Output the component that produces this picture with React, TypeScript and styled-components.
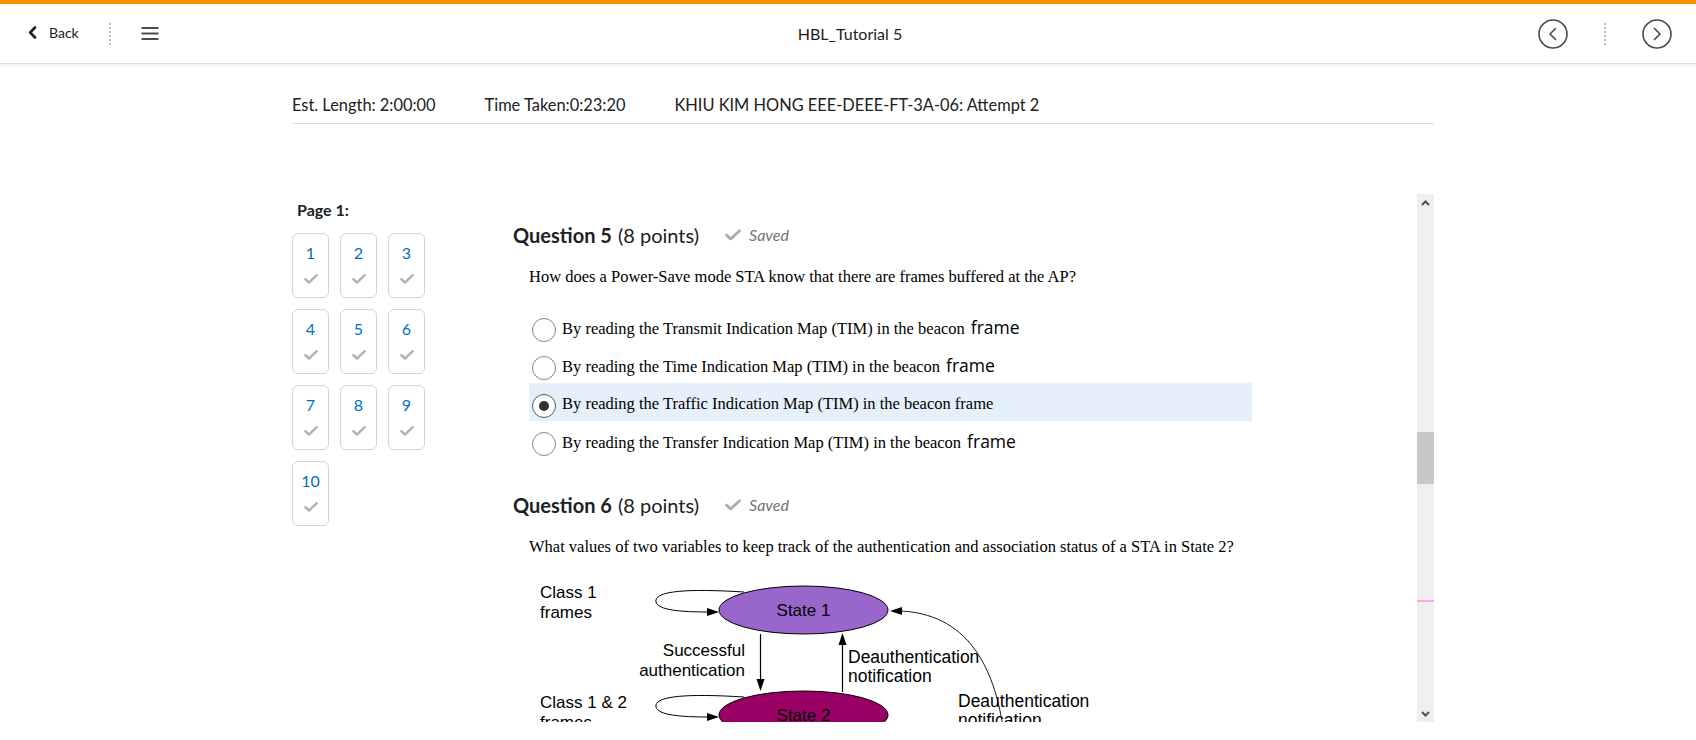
import React from 'react';
import styled, { createGlobalStyle } from 'styled-components';

const GlobalStyle = createGlobalStyle`
  html, body { margin: 0; padding: 0; background: #ffffff; }
  body { font-family: Lato, "Noto Sans", sans-serif; color: #202122; overflow: hidden; }
  * { box-sizing: border-box; }
`;

const Page = styled.div`
  width: 1696px;
  height: 740px;
  overflow: hidden;
  background: #fff;
`;

const TopBar = styled.header`
  height: 64px;
  border-top: 4px solid #f49200;
  border-bottom: 1px solid #dcdcdc;
  box-shadow: 0 2px 4px rgba(0, 0, 0, 0.07);
  display: grid;
  grid-template-columns: 1fr auto 1fr;
  align-items: center;
  padding: 0 24px 0 28px;
  position: relative;
  z-index: 2;
  background: #fff;
`;

const Group = styled.div<{ $end?: boolean }>`
  display: flex;
  align-items: center;
  justify-content: ${(p) => (p.$end ? 'flex-end' : 'flex-start')};
  gap: ${(p) => (p.$end ? '36px' : '30px')};
`;

const BackButton = styled.div`
  display: flex;
  align-items: center;
  gap: 12px;
  font-size: 14px;
  color: #202122;
  margin-bottom: 2px;
`;

const Title = styled.div`
  font-size: 16px;
  color: #202122;
  margin-bottom: 1px;
`;

const DotSep = styled.span`
  display: block;
  width: 2px;
  height: 22px;
  background: repeating-linear-gradient(to bottom, #b8bcc0 0 2px, transparent 2px 4px);
`;

const IconBox = styled.span`
  display: flex;
  align-items: center;
  justify-content: center;
`;

const InfoBar = styled.div`
  margin: 29px 0 0 292px;
  width: 1142px;
  display: flex;
  gap: 49px;
  font-size: 16.4px;
  line-height: 24px;
  padding-bottom: 6px;
  border-bottom: 1px solid #d9dcde;
  color: #202122;
`;

const Body = styled.div`
  margin: 70px 0 0 292px;
  display: flex;
  height: 528px;
  width: 1142px;
`;

const Nav = styled.nav`
  width: 208px;
  padding-top: 6px;
`;

const NavLabel = styled.div`
  font-size: 16px;
  font-weight: 700;
  line-height: 20px;
  padding-left: 5px;
`;

const NavGrid = styled.div`
  margin-top: 13px;
  display: grid;
  grid-template-columns: repeat(3, 37px);
  gap: 11px;
`;

const NavBox = styled.div`
  height: 65px;
  border: 1px solid #cfd5db;
  border-radius: 6px;
  display: flex;
  flex-direction: column;
  align-items: center;
  padding-top: 9px;
`;

const NavNum = styled.span`
  font-size: 16px;
  line-height: 20px;
  color: #006fbf;
`;

const NavCheck = styled.span`
  margin-top: 11px;
  display: flex;
`;

const Pane = styled.div`
  flex: 1;
  display: flex;
  height: 528px;
`;

const PaneContent = styled.div`
  flex: 1;
  overflow: hidden;
  padding: 26px 0 0 13px;
`;

const Heading = styled.div<{ $gap?: number }>`
  display: flex;
  align-items: center;
  font-size: 20px;
  line-height: 30px;
  margin-top: ${(p) => p.$gap ?? 0}px;
  color: #202122;
`;

const Strong = styled.strong`
  font-weight: 700;
  margin-right: 6px;
`;

const Saved = styled.span`
  display: flex;
  align-items: center;
  gap: 8px;
  margin-left: 26px;
  font-size: 16px;
  font-style: italic;
  color: #6e7477;
`;

const QText = styled.p`
  margin: 17px 0 0 16px;
  font-family: "Liberation Serif", "Times New Roman", serif;
  font-size: 16.5px;
  line-height: 20px;
  color: #000;
`;

const Options = styled.div`
  margin: 20px 0 0 16px;
  width: 723px;
  display: flex;
  flex-direction: column;
`;

const OptionRow = styled.label<{ $selected?: boolean }>`
  height: 38px;
  display: flex;
  align-items: center;
  padding: 4px 0 0 3px;
  gap: 6px;
  background: ${(p) => (p.$selected ? '#e6f0fb' : 'transparent')};
  font-family: "Liberation Serif", "Times New Roman", serif;
  font-size: 16.5px;
  line-height: 20px;
  color: #000;
`;

const Radio = styled.input`
  appearance: none;
  margin: 4px 0 0 0;
  width: 24px;
  height: 24px;
  border-radius: 50%;
  border: 1px solid #858585;
  background: #fff;
  display: grid;
  place-items: center;
  flex: none;
  &:checked {
    border-color: #5a5a5a;
  }
  &:checked::after {
    content: '';
    width: 10px;
    height: 10px;
    border-radius: 50%;
    background: #333;
  }
`;

const SansWord = styled.span`
  font-family: "Open Sans", "Noto Sans", sans-serif;
  font-size: 17.5px;
  margin-left: 6px;
`;

const Diagram = styled.svg`
  display: block;
  margin: 19px 0 0 17px;
  font-family: "Liberation Sans", Arial, sans-serif;
  font-size: 17px;
`;

const Scrollbar = styled.div`
  width: 17px;
  display: flex;
  flex-direction: column;
  background: #efefef;
`;

const ScrollButton = styled.div`
  height: 17px;
  display: flex;
  align-items: center;
  justify-content: center;
`;

const Track = styled.div`
  flex: 1;
  position: relative;
`;

const Thumb = styled.div`
  margin-top: 221px;
  height: 52px;
  background: #c8c8c8;
`;

const Marker = styled.div`
  position: absolute;
  left: 0;
  right: 0;
  top: 389px;
  height: 2px;
  background: #f2a8ee;
`;

const CheckIcon = ({ w = 14, color = '#afb4b8' }: { w?: number; color?: string }) => (
  <svg width={w} height={Math.round(w * 0.72)} viewBox="0 0 13 9.4">
    <polyline points="1.2,4.8 4.6,8 11.8,1.2" fill="none" stroke={color} strokeWidth="2.3" strokeLinecap="round" strokeLinejoin="round" />
  </svg>
);

const CircleChevron = ({ dir }: { dir: 'left' | 'right' }) => (
  <svg width="30" height="30" viewBox="0 0 30 30">
    <circle cx="15" cy="15" r="14" fill="none" stroke="#494c4e" strokeWidth="1.6" />
    <polyline
      points={dir === 'left' ? '17.5,9.5 12,15 17.5,20.5' : '12.5,9.5 18,15 12.5,20.5'}
      fill="none"
      stroke="#494c4e"
      strokeWidth="1.7"
      strokeLinecap="round"
      strokeLinejoin="round"
    />
  </svg>
);

const navItems = ['1', '2', '3', '4', '5', '6', '7', '8', '9', '10'];

const q5Options: { text: string; sans: boolean; selected?: boolean }[] = [
  { text: 'By reading the Transmit Indication Map (TIM) in the beacon', sans: true },
  { text: 'By reading the Time Indication Map (TIM) in the beacon', sans: true },
  { text: 'By reading the Traffic Indication Map (TIM) in the beacon frame', sans: false, selected: true },
  { text: 'By reading the Transfer Indication Map (TIM) in the beacon', sans: true },
];

const Arrow = ({ x, y, dir }: { x: number; y: number; dir: 'right' | 'down' | 'up' | 'left' }) => {
  let pts = '';
  if (dir === 'right') pts = `${x},${y} ${x - 12},${y - 4} ${x - 12},${y + 4}`;
  if (dir === 'left') pts = `${x},${y} ${x + 12},${y - 4} ${x + 12},${y + 4}`;
  if (dir === 'down') pts = `${x},${y} ${x - 4},${y - 12} ${x + 4},${y - 12}`;
  if (dir === 'up') pts = `${x},${y} ${x - 4},${y + 12} ${x + 4},${y + 12}`;
  return <polygon points={pts} fill="#000" />;
};

const StateDiagram = () => (
  <Diagram width="620" height="200" viewBox="0 0 620 200">
    <text x="10" y="22">Class 1</text>
    <text x="10" y="42">frames</text>
    <path d="M214 16 C150 12, 124 16, 126 26 C128 34, 150 36, 178 36" fill="none" stroke="#000" strokeWidth="1" />
    <Arrow x={189} y={36} dir="right" />
    <ellipse cx="273.5" cy="34" rx="84.5" ry="24" fill="#9966cc" stroke="#000" strokeWidth="1" />
    <text x="273.5" y="40" textAnchor="middle">State 1</text>

    <line x1="230.5" y1="58" x2="230.5" y2="104" stroke="#000" strokeWidth="1.2" />
    <Arrow x={230.5} y={115} dir="down" />
    <line x1="312.5" y1="68" x2="312.5" y2="116" stroke="#000" strokeWidth="1.2" />
    <Arrow x={312.5} y={57} dir="up" />

    <text x="215" y="80" textAnchor="end">Successful</text>
    <text x="215" y="100" textAnchor="end">authentication</text>
    <text x="318" y="87" fontSize="17.5">Deauthentication</text>
    <text x="318" y="106" fontSize="17.5">notification</text>

    <text x="10" y="132">Class 1 &amp; 2</text>
    <text x="10" y="152">frames</text>
    <path d="M214 121 C150 117, 124 121, 126 131 C128 139, 150 141, 178 141" fill="none" stroke="#000" strokeWidth="1" />
    <Arrow x={189} y={141} dir="right" />
    <ellipse cx="273.5" cy="139" rx="84.5" ry="24" fill="#990066" stroke="#000" strokeWidth="1" />
    <text x="273.5" y="145" textAnchor="middle">State 2</text>

    <text x="428" y="131" fontSize="17.5">Deauthentication</text>
    <text x="428" y="150" fontSize="17.5">notification</text>
    <path d="M371 35 C430 38, 474 80, 477 200" fill="none" stroke="#000" strokeWidth="0.9" />
    <Arrow x={360} y={35} dir="left" />
  </Diagram>
);

export default function App() {
  return (
    <Page>
      <GlobalStyle />
      <TopBar>
        <Group>
          <BackButton>
            <svg width="9" height="13" viewBox="0 0 9 13">
              <polyline points="7,1.5 2.2,6.5 7,11.5" fill="none" stroke="#202122" strokeWidth="2.6" strokeLinecap="round" strokeLinejoin="round" />
            </svg>
            <span>Back</span>
          </BackButton>
          <DotSep />
          <IconBox>
            <svg width="18" height="13" viewBox="0 0 18 13">
              <line x1="0.5" y1="1" x2="17.5" y2="1" stroke="#494c4e" strokeWidth="2" />
              <line x1="0.5" y1="6.5" x2="17.5" y2="6.5" stroke="#494c4e" strokeWidth="2" />
              <line x1="0.5" y1="12" x2="17.5" y2="12" stroke="#494c4e" strokeWidth="2" />
            </svg>
          </IconBox>
        </Group>
        <Title>HBL_Tutorial 5</Title>
        <Group $end>
          <IconBox>
            <CircleChevron dir="left" />
          </IconBox>
          <DotSep />
          <IconBox>
            <CircleChevron dir="right" />
          </IconBox>
        </Group>
      </TopBar>

      <InfoBar>
        <span>Est. Length: 2:00:00</span>
        <span>Time Taken:0:23:20</span>
        <span>KHIU KIM HONG EEE-DEEE-FT-3A-06: Attempt 2</span>
      </InfoBar>

      <Body>
        <Nav>
          <NavLabel>Page 1:</NavLabel>
          <NavGrid>
            {navItems.map((n) => (
              <NavBox key={n}>
                <NavNum>{n}</NavNum>
                <NavCheck>
                  <CheckIcon />
                </NavCheck>
              </NavBox>
            ))}
          </NavGrid>
        </Nav>

        <Pane>
          <PaneContent>
            <Heading>
              <Strong>Question 5</Strong>
              <span>(8 points)</span>
              <Saved>
                <CheckIcon w={16} color="#a9aeb2" />
                Saved
              </Saved>
            </Heading>
            <QText>How does a Power-Save mode STA know that there are frames buffered at the AP?</QText>
            <Options>
              {q5Options.map((o, i) => (
                <OptionRow key={i} $selected={o.selected}>
                  <Radio type="radio" name="q5" defaultChecked={o.selected} />
                  <span>
                    {o.text}
                    {o.sans && <SansWord>frame</SansWord>}
                  </span>
                </OptionRow>
              ))}
            </Options>

            <Heading $gap={31}>
              <Strong>Question 6</Strong>
              <span>(8 points)</span>
              <Saved>
                <CheckIcon w={16} color="#a9aeb2" />
                Saved
              </Saved>
            </Heading>
            <QText>
              What values of two variables to keep track of the authentication and association status of a STA in State 2?
            </QText>
            <StateDiagram />
          </PaneContent>
          <Scrollbar>
            <ScrollButton>
              <svg width="9" height="6" viewBox="0 0 9 6">
                <polyline points="1,5 4.5,1.5 8,5" fill="none" stroke="#505050" strokeWidth="2" />
              </svg>
            </ScrollButton>
            <Track>
              <Thumb />
              <Marker />
            </Track>
            <ScrollButton>
              <svg width="9" height="6" viewBox="0 0 9 6">
                <polyline points="1,1 4.5,4.5 8,1" fill="none" stroke="#505050" strokeWidth="2" />
              </svg>
            </ScrollButton>
          </Scrollbar>
        </Pane>
      </Body>
    </Page>
  );
}
